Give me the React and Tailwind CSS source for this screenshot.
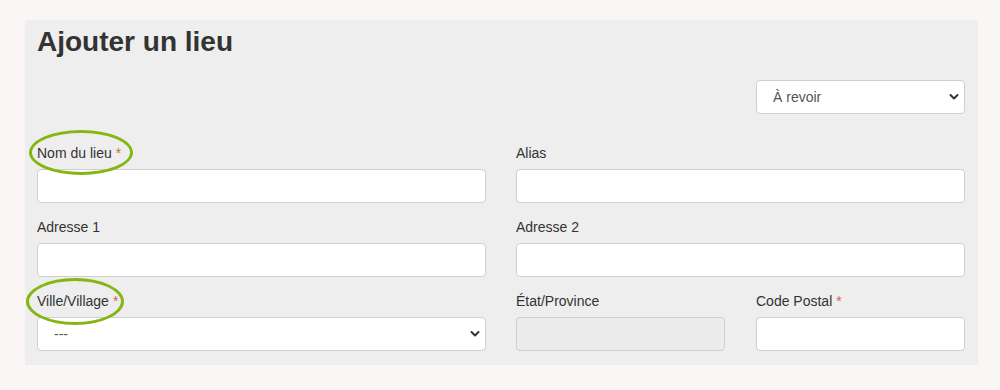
const Chevron = () => (
  <svg className="pointer-events-none absolute right-[6px] top-1/2 -translate-y-1/2" width="10" height="7" viewBox="0 0 10 7">
    <path d="M1.5 1.5 L5 5 L8.5 1.5" fill="none" stroke="#333" strokeWidth="2" strokeLinecap="round" strokeLinejoin="round" />
  </svg>
);

const Field = ({ label, required, children }) => (
  <div className="flex flex-col gap-[6px]">
    <label className="text-[14px] leading-[20px] text-[#333]">
      {label}
      {required && <span className="ml-[4px] text-[#e25a4f]">*</span>}
    </label>
    {children}
  </div>
);

const inputCls = 'h-[34px] w-full rounded-[4px] border border-[#cfcfcf] bg-white px-3 text-[14px] outline-none';

const Select = ({ value, className = '' }) => (
  <div className={`relative ${className}`}>
    <select
      defaultValue={value}
      className="h-[34px] w-full appearance-none rounded-[4px] border border-[#cfcfcf] bg-white pl-[16px] pr-6 text-[14px] text-[#555] outline-none"
    >
      <option>{value}</option>
    </select>
    <Chevron />
  </div>
);

const App = () => {
  return (
    <div className="h-[390px] w-[1000px] bg-[#f9f6f5] pt-[20px] pl-[25px]" style={{ fontFamily: '"Liberation Sans", Arial, sans-serif' }}>
      <div className="relative w-[953px] bg-[#eeeeee] pt-[6px] pb-[14px] pl-[12px] pr-[13px]">
        <h1 className="text-[28px] leading-[32px] font-bold text-[#333]">Ajouter un lieu</h1>

        <div className="mt-[22px] flex justify-end">
          <Select value="À revoir" className="w-[209px]" />
        </div>

        <div className="mt-[29px] grid grid-cols-2 gap-x-[30px] gap-y-[14px]">
          <Field label="Nom du lieu" required>
            <input className={inputCls} />
          </Field>
          <Field label="Alias">
            <input className={inputCls} />
          </Field>
          <Field label="Adresse 1">
            <input className={inputCls} />
          </Field>
          <Field label="Adresse 2">
            <input className={inputCls} />
          </Field>
          <Field label="Ville/Village" required>
            <Select value="---" />
          </Field>
          <div className="grid grid-cols-2 gap-x-[31px]">
            <Field label="État/Province">
              <input disabled className="h-[34px] w-full rounded-[4px] border border-[#cfcfcf] bg-[#ececec]" />
            </Field>
            <Field label="Code Postal" required>
              <input className={inputCls} />
            </Field>
          </div>
        </div>

        {/* annotation rings */}
        <div className="pointer-events-none absolute left-[4px] top-[110px] h-[45px] w-[104px] rounded-[50%] border-[3px] border-[#84b614]" />
        <div className="pointer-events-none absolute left-[1px] top-[258px] h-[47px] w-[98px] rounded-[50%] border-[3px] border-[#84b614]" />
      </div>
    </div>
  );
};

export default App;
